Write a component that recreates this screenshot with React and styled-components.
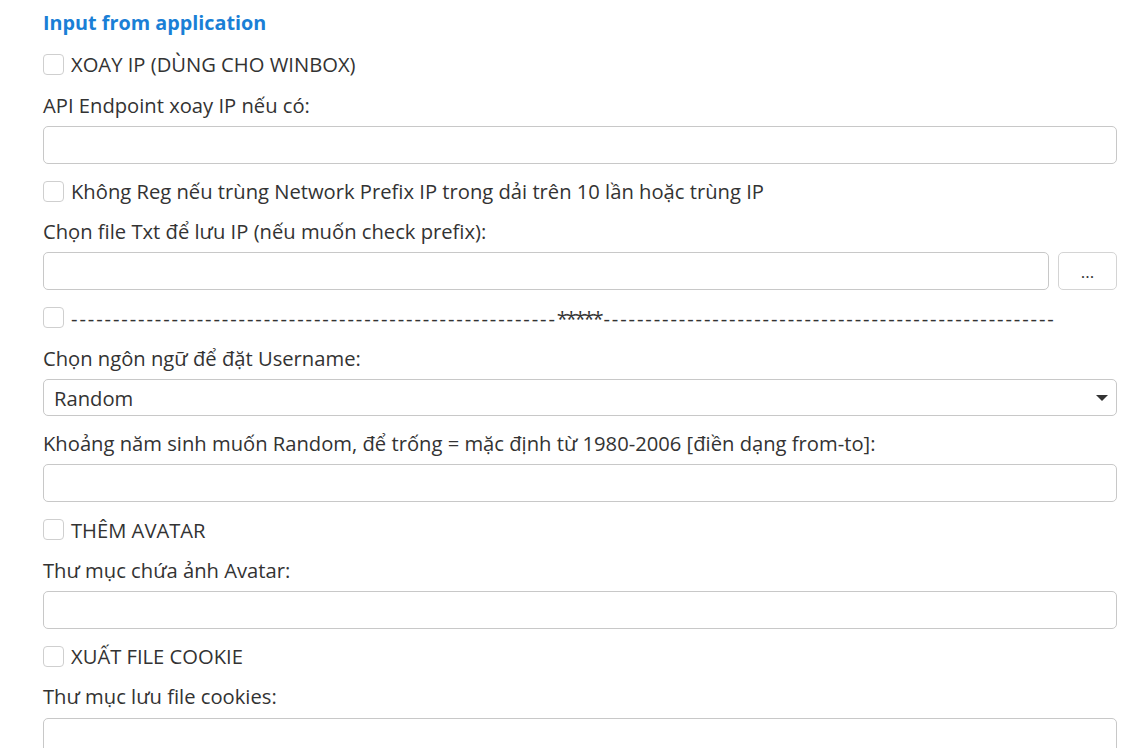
import React from "react";
import styled, { createGlobalStyle } from "styled-components";

const Global = createGlobalStyle`
  html, body { margin: 0; padding: 0; background: #fff; }
  body { font-family: "Open Sans", "Noto Sans", sans-serif; color: #333; }
  * { box-sizing: border-box; }
`;

const Page = styled.div`
  display: flex;
  flex-direction: column;
  padding: 8px 6px 0 43px;
  width: 1123px;
`;

const Title = styled.h2`
  margin: 0;
  font-size: 19.8px;
  line-height: 30.3px;
  font-weight: 700;
  color: #1a7fd6;
`;

const CheckRow = styled.label`
  display: flex;
  align-items: center;
  gap: 7px;
  height: 30.3px;
  margin-top: ${(p) => p.$mt}px;
  font-size: 20.2px;
  color: #333;
  white-space: nowrap;
`;

const Box = styled.span`
  width: 21px;
  height: 21px;
  flex: none;
  border: 1px solid #cfcfcf;
  border-radius: 4px;
  background: #fff;
`;

const Dashes = styled.span`
  letter-spacing: 1.88px;
`;

const Stars = styled.span`
  letter-spacing: -2.2px;
  margin-right: 2px;
`;

const Label = styled.div`
  margin-top: ${(p) => p.$mt}px;
  font-size: 20.2px;
  line-height: 30.3px;
  color: #333;
  white-space: nowrap;
`;

const Control = styled.div`
  margin-top: 6px;
  display: flex;
  gap: 9px;
`;

const Input = styled.div`
  flex: 1;
  height: 38px;
  border: 1px solid #c8c8c8;
  border-radius: 5px;
  background: #fff;
`;

const BrowseButton = styled.div`
  width: 59px;
  height: 38px;
  flex: none;
  border: 1px solid #d4d4d4;
  border-radius: 5px;
  display: flex;
  align-items: center;
  justify-content: center;
  font-size: 17px;
  color: #333;
`;

const Select = styled.div`
  flex: 1;
  height: 37px;
  border: 1px solid #c8c8c8;
  border-radius: 5px;
  display: flex;
  align-items: center;
  justify-content: space-between;
  padding: 0 8px 0 10px;
  font-size: 20.2px;
  color: #333;
`;

const Caret = styled.span`
  width: 0;
  height: 0;
  border-left: 6px solid transparent;
  border-right: 6px solid transparent;
  border-top: 6px solid #333;
`;

const dashes = (n) => "-".repeat(n);

export default function App() {
  return (
    <>
      <Global />
      <Page>
        <Title>Input from application</Title>
        <CheckRow $mt={11}>
          <Box />
          XOAY IP (DÙNG CHO WINBOX)
        </CheckRow>
        <Label $mt={10}>API Endpoint xoay IP nếu có:</Label>
        <Control>
          <Input />
        </Control>
        <CheckRow $mt={12}>
          <Box />
          Không Reg nếu trùng Network Prefix IP trong dải trên 10 lần hoặc trùng IP
        </CheckRow>
        <Label $mt={10}>Chọn file Txt để lưu IP (nếu muốn check prefix):</Label>
        <Control>
          <Input />
          <BrowseButton>...</BrowseButton>
        </Control>
        <CheckRow $mt={12}>
          <Box />
          <span>
            <Dashes>{dashes(58)}</Dashes>
            <Stars>*****</Stars>
            <Dashes>{dashes(54)}</Dashes>
          </span>
        </CheckRow>
        <Label $mt={10}>Chọn ngôn ngữ để đặt Username:</Label>
        <Control>
          <Select>
            <span>Random</span>
            <Caret />
          </Select>
        </Control>
        <Label $mt={12}>
          Khoảng năm sinh muốn Random, để trống = mặc định từ 1980-2006 [điền dạng from-to]:
        </Label>
        <Control>
          <Input />
        </Control>
        <CheckRow $mt={12}>
          <Box />
          THÊM AVATAR
        </CheckRow>
        <Label $mt={10}>Thư mục chứa ảnh Avatar:</Label>
        <Control>
          <Input />
        </Control>
        <CheckRow $mt={12}>
          <Box />
          XUẤT FILE COOKIE
        </CheckRow>
        <Label $mt={10}>Thư mục lưu file cookies:</Label>
        <Control>
          <Input />
        </Control>
      </Page>
    </>
  );
}
